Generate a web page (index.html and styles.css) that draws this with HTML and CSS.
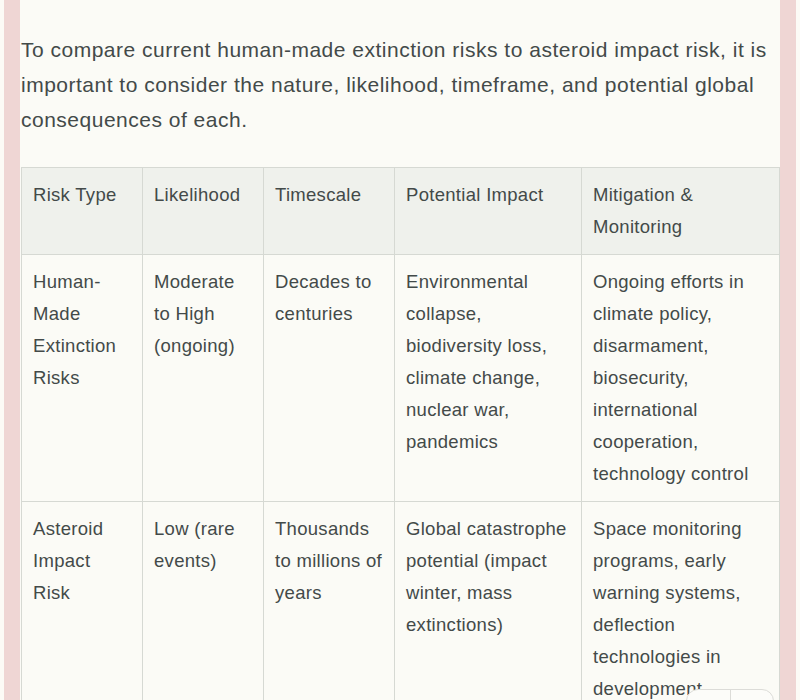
FILE: index.html
```html
<!DOCTYPE html>
<html>
<head>
<meta charset="utf-8">
<link rel="stylesheet" href="styles.css">
</head>
<body>
<div class="frame">
  <div class="content">
    <p class="intro">To compare current human-made extinction risks to asteroid impact risk, it is important to consider the nature, likelihood, timeframe, and potential global consequences of each.</p>
    <table class="risk">
      <colgroup>
        <col class="c1"><col class="c2"><col class="c3"><col class="c4"><col class="c5">
      </colgroup>
      <thead>
        <tr><th>Risk Type</th><th>Likelihood</th><th>Timescale</th><th>Potential Impact</th><th>Mitigation &amp; Monitoring</th></tr>
      </thead>
      <tbody>
        <tr>
          <td>Human-Made Extinction Risks</td>
          <td>Moderate to High (ongoing)</td>
          <td>Decades to centuries</td>
          <td>Environmental collapse, biodiversity loss, climate change, nuclear war, pandemics</td>
          <td>Ongoing efforts in climate policy, disarmament, biosecurity, international cooperation, technology control</td>
        </tr>
        <tr>
          <td>Asteroid Impact Risk</td>
          <td>Low (rare events)</td>
          <td>Thousands to millions of years</td>
          <td>Global catastrophe potential (impact winter, mass extinctions)</td>
          <td>Space monitoring programs, early warning systems, deflection technologies in development</td>
        </tr>
      </tbody>
    </table>
  </div>
</div>
<div class="tools"><span class="tool"></span><span class="tool"></span></div>
</body>
</html>
```
FILE: styles.css
```css
html, body {
  margin: 0;
  padding: 0;
  background: #fcfbf6;
  overflow: hidden;
}
.frame {
  margin: 0 4px;
  padding: 0 16px;
  background: #efd6d4;
  min-height: 700px;
}
.content {
  background: #fbfbf6;
  min-height: 700px;
  padding-top: 32px;
  font-family: "Liberation Sans", Arial, sans-serif;
  color: #434a49;
}
.intro {
  margin: 0 0 30px 0;
  padding-left: 1px;
  font-size: 21px;
  letter-spacing: 0.5px;
  line-height: 35px;
}
.risk {
  border-collapse: collapse;
  table-layout: fixed;
  width: 758px;
  margin-left: 1px;
  font-size: 18.5px;
  letter-spacing: 0.3px;
  line-height: 32px;
}
.c1 { width: 121px; }
.c2 { width: 121px; }
.c3 { width: 131px; }
.c4 { width: 187px; }
.c5 { width: 198px; }
.risk th, .risk td {
  border: 1px solid #d6d9d3;
  padding: 11px 11px 11px 11px;
  text-align: left;
  vertical-align: top;
  font-weight: normal;
}
.risk th {
  background: #eff1ec;
}
.tools {
  position: absolute;
  left: 686px;
  top: 689px;
  width: 86px;
  height: 40px;
  display: flex;
  border: 1px solid #dcdcd8;
  border-radius: 12px;
  background: #fcfcf9;
}
.tool {
  flex: 1;
}
.tool + .tool {
  border-left: 1px solid #dcdcd8;
}
```
